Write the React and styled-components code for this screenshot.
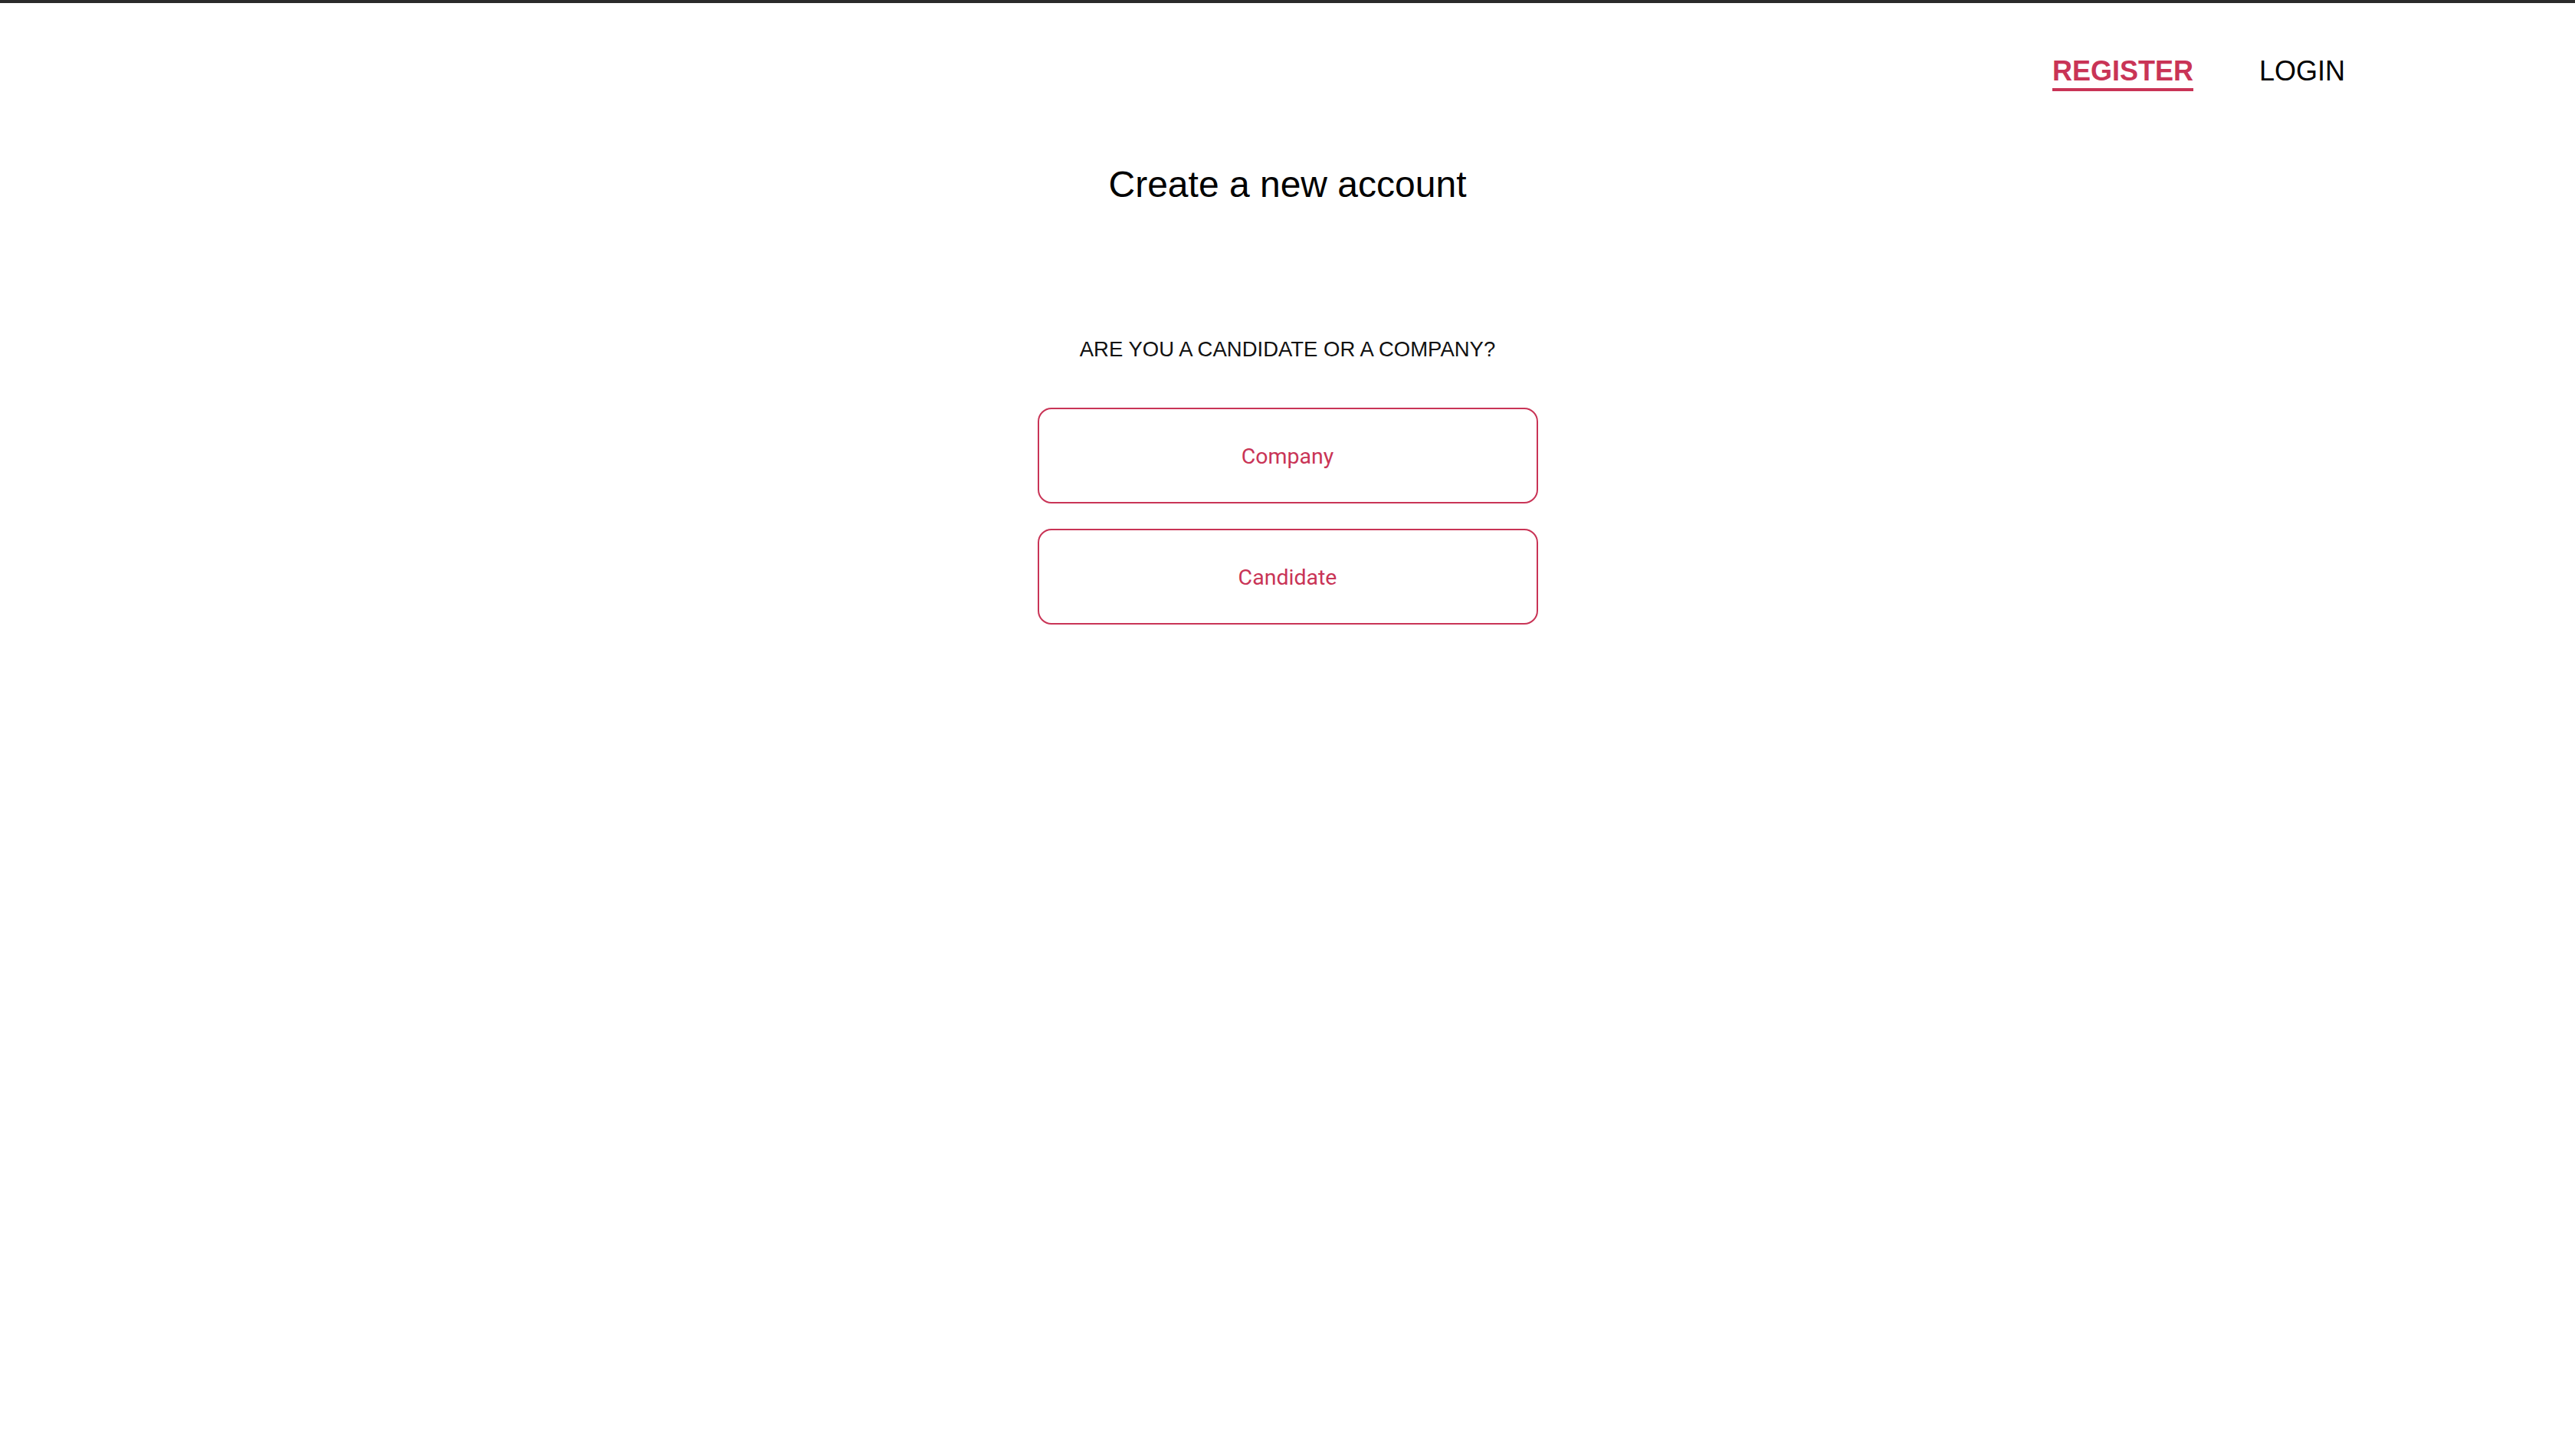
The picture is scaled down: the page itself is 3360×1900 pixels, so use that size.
import React, { useState } from 'react';
import styled, { createGlobalStyle } from 'styled-components';

const crimson = '#c93456';

const GlobalStyle = createGlobalStyle`
  html, body {
    margin: 0;
    padding: 0;
    background: #fff;
  }
  * {
    box-sizing: border-box;
  }
`;

// Whole window, with the thin dark strip of the window frame on top
const Page = styled.div`
  min-height: 1900px;
  border-top: 4px solid #2b2b2b;
  background: #fff;
  font-family: 'Liberation Sans', Arial, sans-serif;
  color: #000;
`;

const Header = styled.header`
  display: flex;
  justify-content: flex-end;
  align-items: flex-start;
  gap: 86px;
  padding: 68px 300px 0 0;
`;

const NavLink = styled.a`
  display: block;
  font-size: 36px;
  line-height: 41px;
  padding-bottom: 2px;
  text-decoration: none;
  cursor: pointer;
  color: ${(p) => (p.$active ? crimson : '#000')};
  font-weight: ${(p) => (p.$active ? 700 : 400)};
  border-bottom: 4px solid ${(p) => (p.$active ? crimson : 'transparent')};
`;

const Main = styled.main`
  display: flex;
  flex-direction: column;
  align-items: center;
  padding-top: 94px;
`;

const Title = styled.h1`
  margin: 0;
  font-size: 48px;
  line-height: 55px;
  font-weight: 400;
`;

const Question = styled.p`
  margin: 172px 0 60px;
  font-size: 27.5px;
  line-height: 32px;
  text-transform: uppercase;
  color: #111;
`;

const Choices = styled.div`
  display: flex;
  flex-direction: column;
  gap: 33px;
`;

const ChoiceButton = styled.button`
  width: 653px;
  height: 125px;
  border: 2px solid ${crimson};
  border-radius: 18px;
  background: #fff;
  color: ${crimson};
  font-family: Roboto, 'Liberation Sans', sans-serif;
  font-size: 28.5px;
  padding-top: 2px;
  cursor: pointer;

  &:hover {
    background: #fdf3f5;
  }
`;

const App = () => {
  const [tab, setTab] = useState('register');

  return (
    <>
      <GlobalStyle />
      <Page>
        <Header>
          <NavLink $active={tab === 'register'} onClick={() => setTab('register')}>
            REGISTER
          </NavLink>
          <NavLink $active={tab === 'login'} onClick={() => setTab('login')}>
            LOGIN
          </NavLink>
        </Header>

        <Main>
          <Title>Create a new account</Title>
          <Question>Are you a candidate or a company?</Question>
          <Choices>
            <ChoiceButton type="button">Company</ChoiceButton>
            <ChoiceButton type="button">Candidate</ChoiceButton>
          </Choices>
        </Main>
      </Page>
    </>
  );
};

export default App;
